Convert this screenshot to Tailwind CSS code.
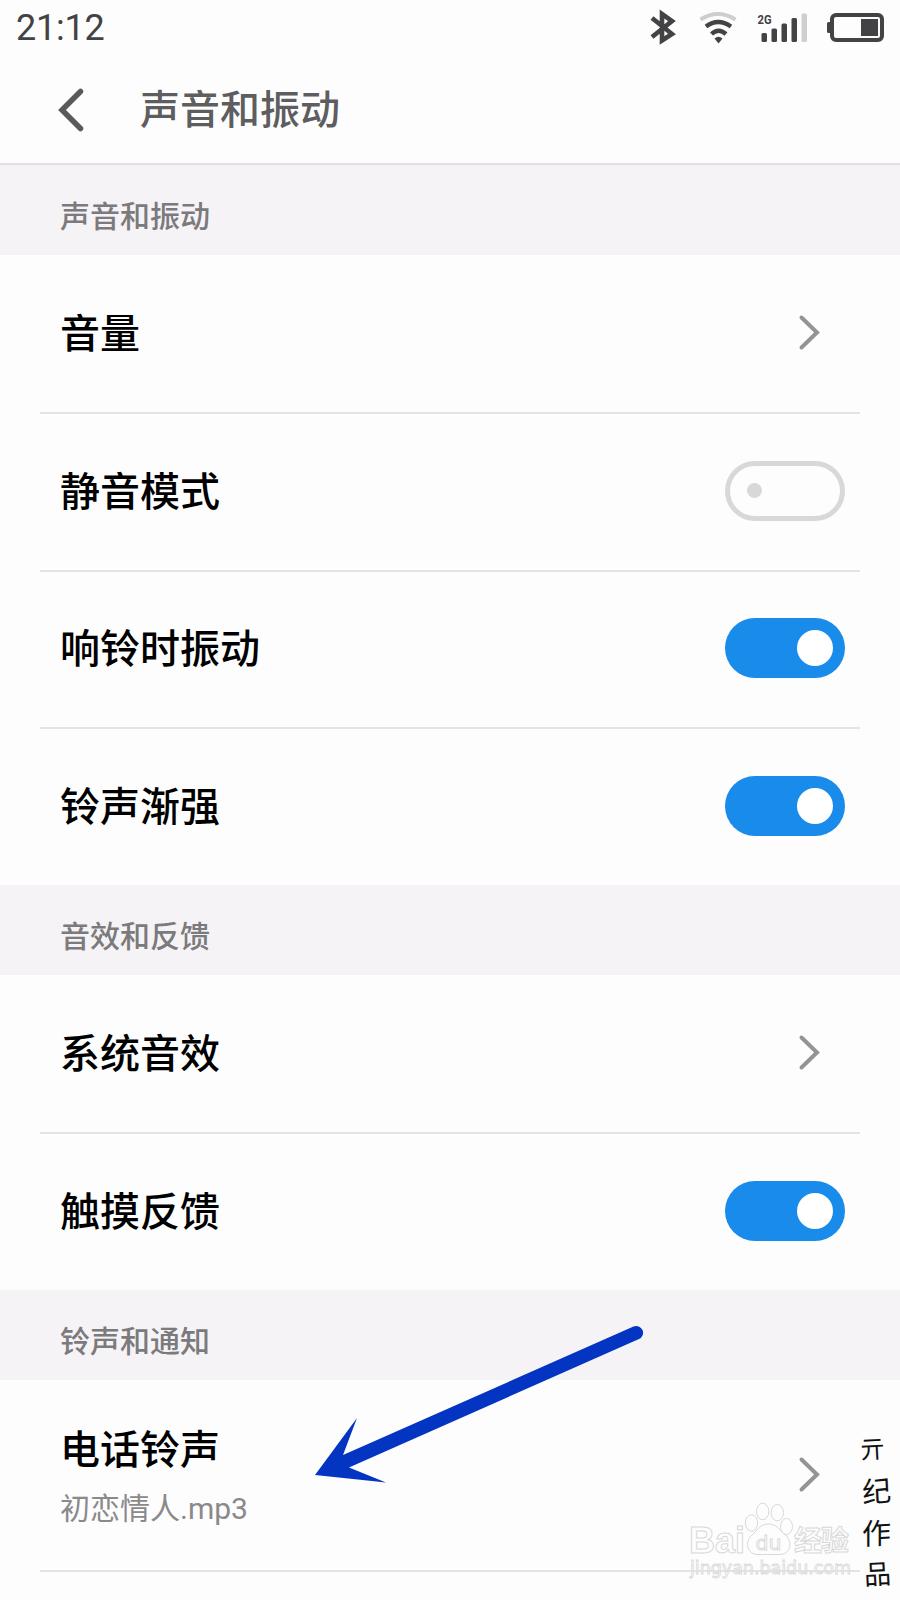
<!DOCTYPE html>
<html lang="zh-CN">
<head>
<meta charset="utf-8">
<title>声音和振动</title>
<script src="https://cdn.jsdelivr.net/npm/@tailwindcss/browser@4"></script>
</head>
<body class="bg-[#fdfdfd]">
<div class="relative w-[900px] h-[1600px] overflow-hidden bg-[#fdfdfd] font-['Roboto','Noto_Sans_CJK_SC',sans-serif] text-black">
  <!-- status bar -->
  <div class="flex h-[55px] items-center justify-between pl-4 pr-[15px]">
    <span class="pt-px text-[36px] leading-[54px] tracking-[-0.2px] text-[#434244]">21:12</span>
    <svg class="h-[55px] w-[250px]" viewBox="635 0 250 55" fill="none">
      <path d="M652 18L672 34L662 40.500V14L672 21L652 37" stroke="#434244" stroke-width="4.600"/>
      <path d="M700.500 19.500Q718 8.500 735.500 19.500" stroke="#cfcecf" stroke-width="4"/>
      <path d="M706 26.500Q718 17.500 731 26.500M711.500 34Q718.500 27.500 726 34" stroke="#434244" stroke-width="4.400"/>
      <path d="M714.500 38.500Q718.500 35 722.500 38.500L718.500 43.500Z" fill="#434244"/>
      <text x="757.500" y="23.500" font-size="13" font-weight="700" fill="#434244" textLength="14" lengthAdjust="spacingAndGlyphs">2G</text>
      <g fill="#434244"><rect x="761.500" y="33" width="5.500" height="9" rx="1.500"/><rect x="771.500" y="28.500" width="5.500" height="13.500" rx="1.500"/><rect x="781.500" y="23.500" width="5.500" height="18.500" rx="1.500"/><rect x="791.500" y="18" width="5.500" height="24" rx="1.500"/></g>
      <rect x="801.500" y="13.500" width="5.500" height="28.500" rx="1.500" fill="#d0cfd0"/>
      <rect x="832" y="15" width="50" height="25" rx="4" stroke="#434244" stroke-width="4"/>
      <rect x="861" y="19" width="17" height="17" fill="#434244"/><rect x="827" y="22" width="4" height="11" rx="1.500" fill="#434244"/>
    </svg>
  </div>
  <!-- title bar -->
  <header class="flex h-[110px] items-center border-b-2 border-[#e0dfe1] pl-[55px]">
    <svg class="mt-[2px] h-[46px] w-[30px]" viewBox="0 0 30 46" fill="none" stroke="#5a595b" stroke-width="5.500" stroke-linecap="round"><path d="M25.500 4.500L7 23L25.500 41.500"/></svg>
    <h1 class="ml-[55px] pt-[4px] text-[40px] leading-[60px] font-medium text-[#5e5d5f]">声音和振动</h1>
  </header>

  <h2 class="flex h-[90px] items-center bg-[#f5f3f6] px-[60px] pt-[14px] text-[30px] leading-[44px] font-medium text-[#7b7a7c]">声音和振动</h2>
  <ul class="mx-10 h-[630px] text-[40px] leading-[60px] font-medium">
    <li class="flex h-[157px] items-center justify-between pl-5 pr-[39px]"><span class="pt-[3px]">音量</span>
      <svg class="-mt-px h-[38px] w-6" viewBox="0 0 24 38" fill="none" stroke="#949396" stroke-width="4" stroke-linecap="round"><path d="M4.500 3.500L20 18.500L4.500 33.500"/></svg></li>
    <li class="flex h-[157.5px] items-center justify-between border-t-2 border-[#e4e3e5] pb-[2px] pl-5 pr-[15px]"><span class="pt-[4px]">静音模式</span>
      <span class="flex h-[60px] w-[120px] items-center rounded-full border-5 border-[#d9d7d9] pl-[17px]"><i class="size-[15px] rounded-full bg-[#d9d7d9]"></i></span></li>
    <li class="flex h-[157.5px] items-center justify-between border-t-2 border-[#e4e3e5] pb-[3px] pl-5 pr-[15px]"><span class="pt-[5px]">响铃时振动</span>
      <span class="flex h-[60px] w-[120px] items-center justify-end rounded-full bg-[#198bea] pr-3"><i class="size-[36px] rounded-full bg-white"></i></span></li>
    <li class="flex h-[157.5px] items-center justify-between border-t-2 border-[#e4e3e5] pb-[2px] pl-5 pr-[15px]"><span class="pt-[4px]">铃声渐强</span>
      <span class="flex h-[60px] w-[120px] items-center justify-end rounded-full bg-[#198bea] pr-3"><i class="size-[36px] rounded-full bg-white"></i></span></li>
  </ul>

  <h2 class="flex h-[90px] items-center bg-[#f5f3f6] px-[60px] pt-[14px] text-[30px] leading-[44px] font-medium text-[#7b7a7c]">音效和反馈</h2>
  <ul class="mx-10 h-[315px] text-[40px] leading-[60px] font-medium">
    <li class="flex h-[157px] items-center justify-between pl-5 pr-[39px]"><span class="pt-[3px]">系统音效</span>
      <svg class="-mt-px h-[38px] w-6" viewBox="0 0 24 38" fill="none" stroke="#949396" stroke-width="4" stroke-linecap="round"><path d="M4.500 3.500L20 18.500L4.500 33.500"/></svg></li>
    <li class="flex h-[157.5px] items-center justify-between border-t-2 border-[#e4e3e5] pb-[2px] pl-5 pr-[15px]"><span class="pt-[4px]">触摸反馈</span>
      <span class="flex h-[60px] w-[120px] items-center justify-end rounded-full bg-[#198bea] pr-3"><i class="size-[36px] rounded-full bg-white"></i></span></li>
  </ul>

  <h2 class="flex h-[90px] items-center bg-[#f5f3f6] px-[60px] pt-[14px] text-[30px] leading-[44px] font-medium text-[#7b7a7c]">铃声和通知</h2>
  <div class="mx-10 flex h-[192px] items-center justify-between border-b-2 border-[#e4e3e5] pl-5 pr-[39px]">
    <div class="pt-[2px]">
      <p class="text-[40px] leading-[60px] font-medium">电话铃声</p>
      <p class="mt-[6px] text-[30px] leading-[44px] text-[#8a898b]">初恋情人.mp3</p>
    </div>
    <svg class="h-[38px] w-6" viewBox="0 0 24 38" fill="none" stroke="#949396" stroke-width="4" stroke-linecap="round"><path d="M4.500 3.500L20 18.500L4.500 33.500"/></svg>
  </div>

  <!-- pointer arrow -->
  <svg class="absolute left-[300px] top-[1310px] h-[190px] w-[360px]" viewBox="0 0 360 190" fill="#0435c2">
    <path d="M15 165L57 108L43 145L333.500 16.500A6.800 6.800 0 0 1 339 29L49 157.500L86 172.500Z"/>
  </svg>

  <!-- watermark -->
  <svg class="absolute left-[680px] top-[1495px] h-[90px] w-[175px]" viewBox="680 1495 175 90" fill="#fdfdfd" stroke="#d8d8d8" stroke-width="1">
    <text x="689" y="1553" font-family="Liberation Sans" font-weight="700" font-size="37" textLength="56" lengthAdjust="spacingAndGlyphs">Bai</text>
    <ellipse cx="751.500" cy="1523" rx="6.200" ry="8.200"/><ellipse cx="762.700" cy="1511.500" rx="6.200" ry="8.200"/><ellipse cx="777.300" cy="1512.700" rx="6.200" ry="8.200"/><ellipse cx="786.500" cy="1526.500" rx="6" ry="8"/>
    <path d="M768.500 1524C760 1524 758 1530 752 1535C744 1542 747 1554.500 758 1554.500H779C791 1554.500 793 1542 785.500 1535C779 1530 777 1524 768.500 1524Z"/>
    <text x="755.500" y="1550" font-family="DejaVu Sans" font-size="19" textLength="26" lengthAdjust="spacingAndGlyphs" stroke-width=".8">du</text>
    <text x="794" y="1551" font-family="Noto Sans CJK SC" font-weight="700" font-size="28" textLength="55">经验</text>
    <text x="690" y="1573.500" font-family="DejaVu Sans" font-size="18" fill-opacity=".6" stroke-width=".8" textLength="161" lengthAdjust="spacingAndGlyphs">jingyan.baidu.com</text>
  </svg>

  <!-- signature -->
  <div class="absolute left-[858px] top-[1426px] flex w-[38px] flex-col items-center font-['Noto_Sans_CJK_SC',sans-serif] text-[29px] leading-[42px] text-[#111]">
    <span class="-translate-x-1 -rotate-3 text-[25px]">亓</span><span class="-rotate-6 -skew-x-3">纪</span><span class="-rotate-3 -skew-x-3">作</span><span class="-rotate-3 text-[27px]">品</span>
  </div>
</div>
</body>
</html>
